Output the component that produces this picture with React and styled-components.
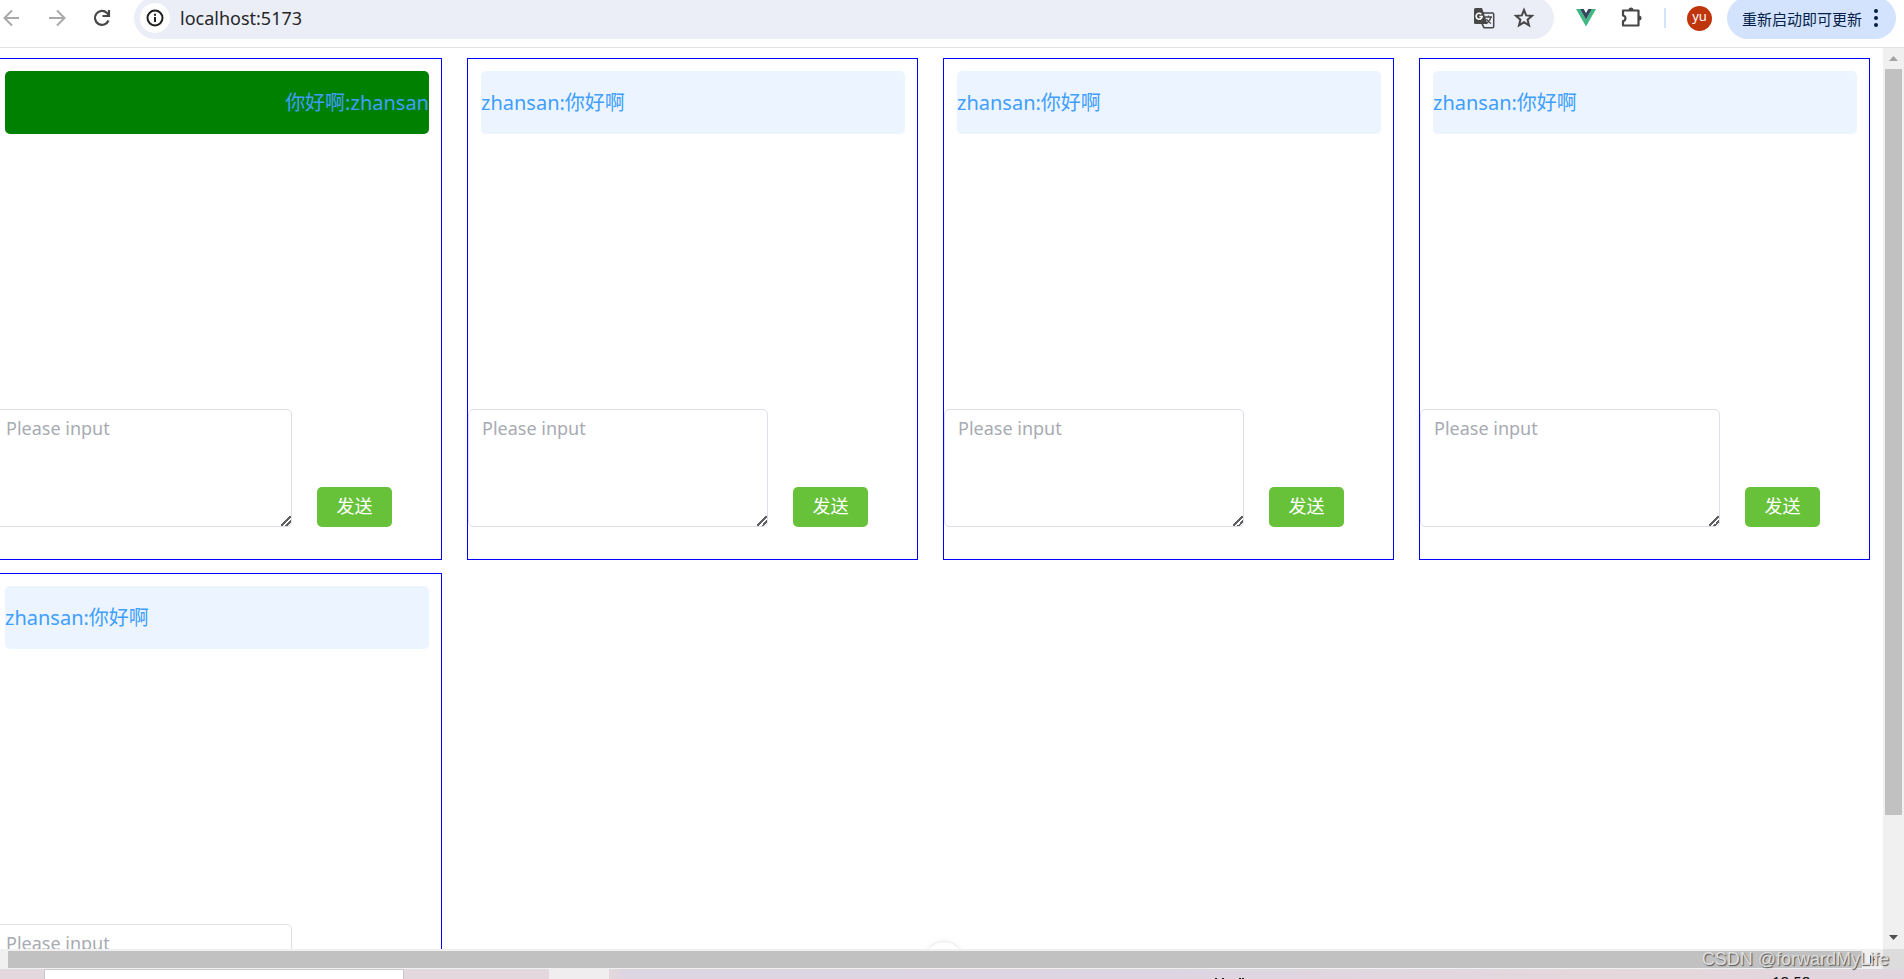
import React from "react";
import styled, { createGlobalStyle } from "styled-components";

const GlobalStyle = createGlobalStyle`
  *, *::before, *::after { box-sizing: border-box; }
  html, body, #root { height: 100%; }
  body {
    margin: 0;
    overflow: hidden;
    background: #fff;
    font-family: "Noto Sans", "Noto Sans CJK SC", sans-serif;
  }
  button { font-family: inherit; cursor: pointer; }
`;

const Shell = styled.div`
  display: flex;
  flex-direction: column;
  height: 100vh;
  overflow: hidden;
`;

const Toolbar = styled.header`
  flex: none;
  display: flex;
  align-items: center;
  height: 48px;
  padding: 0 8px 11px 0;
  border-bottom: 1px solid #e1e1e1;
  overflow: hidden;
`;

const NavGroup = styled.nav`
  flex: none;
  display: flex;
  gap: 21px;
  margin-right: 20px;
`;

const IconButton = styled.button`
  flex: none;
  display: grid;
  place-items: center;
  width: 24px;
  height: 24px;
  padding: 0;
  border: 0;
  background: none;
  color: ${(p) => (p.$muted ? "#a9a9a9" : "#474747")};
`;

const AddressBar = styled.div`
  flex: 1;
  display: flex;
  align-items: center;
  gap: 16px;
  height: 42px;
  padding: 0 18px 0 6px;
  border-radius: 21px;
  background: #ebeef7;
`;

const SiteInfo = styled.button`
  flex: none;
  display: grid;
  place-items: center;
  width: 30px;
  height: 30px;
  margin-right: -6px;
  padding: 0;
  border: 0;
  border-radius: 50%;
  background: #fff;
  color: #1f1f1f;
`;

const UrlInput = styled.input`
  flex: 1;
  min-width: 0;
  height: 26px;
  padding: 0;
  border: 0;
  background: none;
  outline: none;
  color: #262626;
  font-family: inherit;
  font-size: 18px;
`;

const Extensions = styled.div`
  flex: none;
  display: flex;
  align-items: center;
  gap: 21px;
  margin: 0 15px 0 20px;
`;

const Divider = styled.span`
  width: 2px;
  height: 20px;
  background: #d3e2fd;
`;

const Avatar = styled.button`
  display: grid;
  place-items: center;
  flex: none;
  width: 25px;
  height: 25px;
  padding: 0 0 4px;
  border: 0;
  border-radius: 50%;
  background: #bf360c;
  color: #fff;
  font-size: 13px;
  line-height: 16px;
`;

const UpdateButton = styled.button`
  flex: none;
  display: flex;
  align-items: center;
  justify-content: space-between;
  width: 169px;
  height: 42px;
  padding: 0 18px 0 15px;
  border: 0;
  border-radius: 21px;
  background: #d3e3fd;
  color: #041e49;
  font-size: 15px;
  white-space: nowrap;
`;

const Viewport = styled.div`
  flex: 1;
  min-height: 0;
  display: flex;
`;

const Page = styled.main`
  position: relative;
  flex: 1;
  min-width: 0;
  overflow: hidden;
  padding-top: 10px;
`;

const Rooms = styled.div`
  display: flex;
  flex-wrap: wrap;
  gap: 13px 25px;
  margin-left: -9px;
`;

const Room = styled.section`
  display: flex;
  flex-direction: column;
  width: 451px;
  height: 502px;
  border: 1px solid #0000ff;
`;

const MessageList = styled.div`
  flex: 1;
  padding: 12px 12px 0 13px;
`;

const Message = styled.p`
  display: flex;
  align-items: center;
  justify-content: ${(p) => (p.$mine ? "flex-end" : "flex-start")};
  height: 63px;
  margin: 0;
  padding-bottom: 2px;
  border-radius: 5px;
  background: ${(p) => (p.$mine ? "#008000" : "#ecf5ff")};
  color: #409eff;
  font-size: 20px;
`;

const Composer = styled.form`
  display: flex;
  align-items: flex-end;
  gap: 25px;
  padding-bottom: 32px;
`;

const MessageInput = styled.textarea`
  width: 300px;
  height: 118px;
  padding: 5px 13px;
  border: 1px solid #dcdfe6;
  border-radius: 5px;
  outline: none;
  background: #fff;
  color: #606266;
  font-family: inherit;
  font-size: 18px;
  line-height: 26px;
  resize: both;
  &::placeholder { color: #a8abb2; }
  &::-webkit-resizer {
    background: linear-gradient(
      135deg,
      transparent 44%, #606060 44%, #606060 56%,
      transparent 56%, transparent 70%, #606060 70%, #606060 81%,
      transparent 81%
    ) right bottom / 10px 10px no-repeat;
  }
`;

const SendButton = styled.button`
  width: 75px;
  height: 40px;
  padding: 0 0 4px;
  border: 0;
  border-radius: 5px;
  background: #67c23a;
  color: #fff;
  font-size: 18px;
`;

const FloatingDot = styled.span`
  position: absolute;
  left: calc(50% - 18px);
  bottom: -32px;
  width: 40px;
  height: 40px;
  border: 1px solid #ececec;
  border-radius: 50%;
  background: #fff;
  box-shadow: 0 0 6px rgba(0, 0, 0, 0.06);
`;

const VerticalBar = styled.div`
  flex: none;
  display: flex;
  flex-direction: column;
  align-items: center;
  width: 21px;
  padding: 7px 0 8px;
  background: #f0f0f0;
`;

const VerticalTrack = styled.div`
  flex: 1;
  width: 17px;
  margin: 7px 0;
`;

const VerticalThumb = styled.div`
  height: 87%;
  background: #c1c1c1;
`;

const Triangle = styled.svg`
  display: block;
  flex: none;
  fill: ${(p) => p.$tone};
`;

const HorizontalBar = styled.div`
  flex: none;
  position: relative;
  display: flex;
  align-items: center;
  height: 20px;
  padding-left: 8px;
  background: #f0f0f0;
`;

const HorizontalThumb = styled.div`
  flex: 1;
  height: 17px;
  margin-right: 8px;
  background: #c1c1c1;
`;

const Corner = styled.div`
  width: 21px;
  height: 20px;
  margin-left: 8px;
  background: #dcdcdc;
`;

const Watermark = styled.span`
  position: absolute;
  right: 15px;
  top: 0;
  color: #dedede;
  font-family: "Liberation Sans", sans-serif;
  font-size: 18px;
  line-height: 20px;
  text-shadow: 1px 1px 1px #555;
  white-space: nowrap;
`;

const Taskbar = styled.footer`
  flex: none;
  display: flex;
  height: 10px;
  overflow: hidden;
  background: linear-gradient(90deg, #e3d8dd 0, #e3d8dd 32%, #dcd5e2 33%, #ddd6e2 62%, #e5d8dc 86%, #e1d5df 100%);
`;

const SearchField = styled.div`
  width: 360px;
  margin-left: 44px;
  border: 1px solid #c8c8c8;
  border-bottom: 0;
  background: #fff;
`;

const ActiveTask = styled.div`
  width: 60px;
  margin-left: 145px;
  background: #f1eef0;
`;

const TrayIcon = styled.svg`
  flex: none;
  align-self: flex-end;
  margin-left: auto;
`;

const Clock = styled.time`
  flex: none;
  width: 132px;
  margin: 4px 0 0 527px;
  color: #111;
  font-size: 15px;
  line-height: 16px;
`;

const rooms = [
  { id: 1, mine: true, text: "你好啊:zhansan" },
  { id: 2, text: "zhansan:你好啊" },
  { id: 3, text: "zhansan:你好啊" },
  { id: 4, text: "zhansan:你好啊" },
  { id: 5, text: "zhansan:你好啊" },
];

const Arrow = ({ flip }) => (
  <svg width="24" height="24" viewBox="0 0 24 24" fill="none" stroke="currentColor" strokeWidth="2">
    <path d={flip ? "M4 12h15M12 4.5l7.5 7.5-7.5 7.5" : "M19 12H5M12 4.5L4.500 12l7.500 7.500"} />
  </svg>
);

function ChatRoom({ room }) {
  return (
    <Room>
      <MessageList>
        <Message $mine={room.mine}>{room.text}</Message>
      </MessageList>
      <Composer onSubmit={(e) => e.preventDefault()}>
        <MessageInput aria-label="Message" placeholder="Please input" />
        <SendButton type="submit">发送</SendButton>
      </Composer>
    </Room>
  );
}

export default function App() {
  return (
    <>
      <GlobalStyle />
      <Shell>
        <Toolbar>
          <NavGroup>
            <IconButton $muted aria-label="Back"><Arrow /></IconButton>
            <IconButton $muted aria-label="Forward"><Arrow flip /></IconButton>
            <IconButton aria-label="Reload">
              <svg width="24" height="24" viewBox="0 0 24 24" fill="none" stroke="currentColor" strokeWidth="2.200">
                <path d="M18.500 14.500A7 7 0 1 1 17 7l2 2.200" />
                <path d="M19 4v6h-6.500" />
              </svg>
            </IconButton>
          </NavGroup>
          <AddressBar>
            <SiteInfo aria-label="Site information">
              <svg width="18" height="18" viewBox="0 0 18 18" fill="none" stroke="currentColor" strokeWidth="2">
                <circle cx="9" cy="9" r="7.500" />
                <path d="M9 8v5M9 4.800v2" />
              </svg>
            </SiteInfo>
            <UrlInput aria-label="Address" defaultValue="localhost:5173" />
            <IconButton aria-label="Translate">
              <svg width="24" height="24" viewBox="0 0 24 24">
                <path fill="none" stroke="currentColor" strokeWidth="1.500" d="M11 7h9.500a1.200 1.200 0 0 1 1.200 1.200v12.300a1.200 1.200 0 0 1-1.200 1.200H12l-2-4" />
                <path fill="currentColor" d="M3.500 2H10l5.500 16H3.500A1.500 1.500 0 0 1 2 16.500v-13A1.500 1.500 0 0 1 3.500 2z" />
                <path fill="none" stroke="#fff" strokeWidth="1.600" d="M9.300 8.200a3 3 0 1 0 .8 2.300H7.300" />
                <path fill="none" stroke="currentColor" strokeWidth="1.300" d="M13 11h7M16.500 9.500V11M19 11c-.7 3-2.500 5-4 6M14.500 13c1 2 2.500 3.500 4.500 4.500" />
              </svg>
            </IconButton>
            <IconButton aria-label="Bookmark">
              <svg width="24" height="24" viewBox="0 0 24 24" fill="none" stroke="currentColor" strokeWidth="2">
                <path d="M12 4l2.200 5.400 5.800.5-4.400 3.800 1.400 5.700-5-3.100-5 3.100 1.400-5.700L4 9.900l5.800-.5z" />
              </svg>
            </IconButton>
          </AddressBar>
          <Extensions>
            <IconButton aria-label="Vue devtools">
              <svg width="20" height="18" viewBox="0 0 20 18">
                <path fill="#41b883" d="M0 0h4l6 10.400L16 0h4L10 17.500z" />
                <path fill="#34495e" d="M4 0h3.700L10 4l2.300-4H16l-6 10.400z" />
              </svg>
            </IconButton>
            <IconButton aria-label="Extensions">
              <svg width="24" height="24" viewBox="0 0 24 24" fill="none" stroke="currentColor" strokeWidth="2.200" strokeLinejoin="round">
                <path d="M4 4.500h15.500v15H4v-4.300c3.300-.5 3.300-5.200 0-5.700z" />
                <path fill="currentColor" stroke="none" d="M9.500 4a2.500 2.500 0 0 1 5 0zM20 9.500a2.500 2.500 0 0 1 0 5z" />
              </svg>
            </IconButton>
            <Divider />
            <Avatar aria-label="Profile">yu</Avatar>
          </Extensions>
          <UpdateButton>
            重新启动即可更新
            <svg width="4" height="18" viewBox="0 0 4 18" fill="currentColor">
              <circle cx="2" cy="2" r="2" />
              <circle cx="2" cy="9" r="2" />
              <circle cx="2" cy="16" r="2" />
            </svg>
          </UpdateButton>
        </Toolbar>
        <Viewport>
          <Page>
            <Rooms>
              {rooms.map((room) => (
                <ChatRoom key={room.id} room={room} />
              ))}
            </Rooms>
            <FloatingDot />
          </Page>
          <VerticalBar>
            <Triangle $tone="#a3a3a3" width="9" height="7" viewBox="0 0 9 7"><path d="M0 6l4.500-5L9 6z" /></Triangle>
            <VerticalTrack><VerticalThumb /></VerticalTrack>
            <Triangle $tone="#505050" width="9" height="7" viewBox="0 0 9 7"><path d="M0 1l4.500 5L9 1z" /></Triangle>
          </VerticalBar>
        </Viewport>
        <HorizontalBar>
          <HorizontalThumb />
          <Triangle $tone="#505050" width="5" height="9" viewBox="0 0 5 9"><path d="M0 0l5 4.500L0 9z" /></Triangle>
          <Corner />
          <Watermark>CSDN @forwardMyLife</Watermark>
        </HorizontalBar>
        <Taskbar>
          <SearchField />
          <ActiveTask />
          <TrayIcon width="30" height="1" viewBox="0 0 30 1" fill="#1a1a1a">
            <path d="M0 0h2v1H0zM7 0h2v1H7zM24 0h2v1h-2zM27 0h2v1h-2z" />
          </TrayIcon>
          <Clock>18:58</Clock>
        </Taskbar>
      </Shell>
    </>
  );
}
